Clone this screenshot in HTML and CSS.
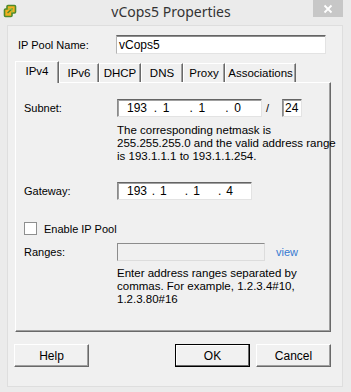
FILE: index.html
```html
<!DOCTYPE html>
<html>
<head>
<meta charset="utf-8">
<link rel="stylesheet" href="styles.css">
</head>
<body>
<div class="window">
  <div class="titlebar">
    <svg class="appicon" width="14" height="14" viewBox="0 0 14 14">
      <path d="M5 1.5 H11.5 Q12.5 1.5 12.5 2.5 V8 Q12.5 9 11.5 9 H9 V11.5 Q9 12.5 8 12.5 H2.5 Q1.5 12.5 1.5 11.5 V6 Q1.5 5 2.5 5 H4 V2.5 Q4 1.5 5 1.5 Z" fill="#f2b01e" stroke="#4e8a2a" stroke-width="1.6"/>
      <path d="M4.5 9 L9.5 4.5" stroke="#4e8a2a" stroke-width="1.4"/>
      <path d="M5 5 H9 V9" fill="none" stroke="#8ac040" stroke-width="1"/>
    </svg>
    <div class="title">vCops5 Properties</div>
    <div class="close">
      <svg width="10" height="10" viewBox="0 0 10 10"><path d="M1.5 1.5 L8.5 8.5 M8.5 1.5 L1.5 8.5" stroke="#fff" stroke-width="1.8"/></svg>
    </div>
  </div>
  <div class="client">
    <div class="name-row">
      <span class="lbl name-lbl">IP Pool Name:</span>
      <div class="textbox name-box">vCops5</div>
    </div>
    <div class="tabs">
      <div class="tab active w-ipv4">IPv4</div>
      <div class="tab w-ipv6">IPv6</div>
      <div class="tab w-dhcp">DHCP</div>
      <div class="tab w-dns">DNS</div>
      <div class="tab w-proxy">Proxy</div>
      <div class="tab w-assoc">Associations</div>
    </div>
    <div class="panel">
      <div class="row subnet-row">
        <span class="lbl field-lbl">Subnet:</span>
        <div class="textbox ipbox subnet-box">
          <span class="oct">193</span><span class="dot">.</span>
          <span class="oct">1</span><span class="dot">.</span>
          <span class="oct">1</span><span class="dot">.</span>
          <span class="oct">0</span>
        </div>
        <span class="slash">/</span>
        <div class="textbox prefix-box">24</div>
      </div>
      <div class="note note-subnet">The corresponding netmask is<br>255.255.255.0 and the valid address range<br>is 193.1.1.1 to 193.1.1.254.</div>
      <div class="row gateway-row">
        <span class="lbl field-lbl">Gateway:</span>
        <div class="textbox ipbox gateway-box">
          <span class="oct">193</span><span class="dot">.</span>
          <span class="oct">1</span><span class="dot">.</span>
          <span class="oct">1</span><span class="dot">.</span>
          <span class="oct">4</span>
        </div>
      </div>
      <div class="row check-row">
        <span class="checkbox"></span>
        <span class="lbl">Enable IP Pool</span>
      </div>
      <div class="row ranges-row">
        <span class="lbl field-lbl">Ranges:</span>
        <div class="textbox disabled ranges-box"></div>
        <span class="link">view</span>
      </div>
      <div class="note note-ranges">Enter address ranges separated by<br>commas. For example, 1.2.3.4#10,<br>1.2.3.80#16</div>
    </div>
    <div class="buttons">
      <div class="btn">Help</div>
      <div class="spacer"></div>
      <div class="btn default">OK</div>
      <div class="btn">Cancel</div>
    </div>
  </div>
</div>
</body>
</html>
```

FILE: styles.css
```css
* { box-sizing: border-box; }
html, body { margin: 0; padding: 0; }
body {
  width: 351px;
  height: 392px;
  background: #ebebeb;
  font-family: "Liberation Sans", Arial, sans-serif;
  font-size: 11px;
  color: #000;
  overflow: hidden;
}
.window {
  display: flex;
  flex-direction: column;
  height: 392px;
}
.titlebar {
  height: 25px;
  display: flex;
  align-items: flex-start;
}
.appicon {
  margin: 4px 0 0 3px;
  flex: none;
}
.title {
  flex: 1;
  text-align: center;
  font-family: "Noto Sans", "Open Sans", sans-serif;
  font-size: 14px;
  color: #333;
  padding: 3px 0 0 12px;
  line-height: 18px;
}
.close {
  width: 30px;
  height: 17px;
  margin-right: 8px;
  background: #c7c7c7;
  display: flex;
  align-items: center;
  justify-content: center;
  flex: none;
}
.close svg { display: block; }

.client {
  margin: 0 8px 0 7px;
  height: 362px;
  background: #f0f0f0;
  border: 1px solid #dedede;
  padding: 0 11px 0 7px;
  display: flex;
  flex-direction: column;
}
.name-row {
  display: flex;
  align-items: center;
  margin-top: 9px;
  height: 19px;
}
.name-lbl {
  width: 101px;
  padding-left: 3px;
}
.textbox {
  background: #fff;
  border-top: 1px solid #646464;
  border-left: 1px solid #8a8a8a;
  border-right: 1px solid #e3e3e3;
  border-bottom: 1px solid #e3e3e3;
  box-shadow: inset 1px 1px 0 #a0a0a0;
  display: flex;
  align-items: center;
}
.name-box {
  width: 210px;
  height: 19px;
  padding-left: 2px;
  font-size: 12px;
  border-left-color: #b4b4b4;
  box-shadow: inset 0 1px 0 #8e8e8e;
}

.tabs {
  display: flex;
  align-items: flex-end;
  margin-top: 7px;
  height: 21px;
}
.tab {
  height: 19px;
  background: #f0f0f0;
  border-top: 1px solid #fff;
  border-left: 1px solid #fff;
  border-right: 1px solid #696969;
  box-shadow: inset -1px 0 0 #a0a0a0;
  display: flex;
  align-items: center;
  justify-content: center;
  font-size: 11.5px;
  padding-bottom: 1px;
}
.tab.active {
  height: 22px;
  margin-bottom: -1px;
  position: relative;
  z-index: 1;
  padding-bottom: 4px;
}
.w-ipv4 { width: 44px; }
.w-ipv6 { width: 40px; }
.w-dhcp { width: 42px; }
.w-dns { width: 42px; }
.w-proxy { width: 42px; }
.w-assoc { width: 71px; }

.panel {
  width: 316px;
  height: 250px;
  border-top: 1px solid #fff;
  border-left: 1px solid #fff;
  border-right: 1px solid #696969;
  border-bottom: 1px solid #696969;
  box-shadow: inset -1px -1px 0 #a0a0a0;
  padding: 0 0 0 8px;
  display: flex;
  flex-direction: column;
}
.row {
  display: flex;
  align-items: center;
}
.field-lbl {
  width: 93px;
  flex: none;
}
.subnet-row { margin-top: 16px; height: 18px; }
.ipbox {
  height: 18px;
  padding-left: 9px;
  font-size: 12px;
}
.oct { width: 27px; }
.dot { width: 9px; }
.subnet-box { width: 145px; }
.gateway-box { width: 135px; }
.slash {
  width: 20px;
  padding-left: 4px;
}
.prefix-box {
  width: 20px;
  height: 18px;
  padding-left: 2px;
  font-size: 12px;
}
.note {
  margin-left: 93px;
  line-height: 13px;
  font-size: 11.5px;
  white-space: nowrap;
}
.note-subnet { margin-top: 7px; }
.gateway-row { margin-top: 19px; height: 18px; }
.check-row { margin-top: 22px; height: 13px; }
.checkbox {
  width: 13px;
  height: 13px;
  background: #fff;
  border: 1px solid #8e8f8f;
  margin-right: 7px;
  flex: none;
}
.ranges-row { margin-top: 8px; height: 18px; }
.textbox.disabled {
  background: #f0f0f0;
  border-top: 1px solid #8c8c8c;
  border-left: 1px solid #8c8c8c;
  border-right: 1px solid #dcdcdc;
  border-bottom: 1px solid #dcdcdc;
  box-shadow: none;
}
.ranges-box { width: 148px; height: 18px; }
.link {
  color: #3579d1;
  margin-left: 11px;
}
.note-ranges { margin-top: 6px; }

.buttons {
  display: flex;
  margin-top: 12px;
  margin-left: -1px;
  gap: 6px;
}
.spacer { flex: 1; }
.btn {
  width: 75px;
  height: 23px;
  background: #f1f1f1;
  border-top: 1px solid #fff;
  border-left: 1px solid #fff;
  border-right: 1px solid #696969;
  border-bottom: 1px solid #696969;
  box-shadow: inset -1px -1px 0 #a0a0a0;
  display: flex;
  align-items: center;
  justify-content: center;
  font-size: 12px;
}
.btn.default {
  border: 1px solid #000;
  box-shadow: inset -1px -1px 0 #696969, inset 1px 1px 0 #fff;
}
```
